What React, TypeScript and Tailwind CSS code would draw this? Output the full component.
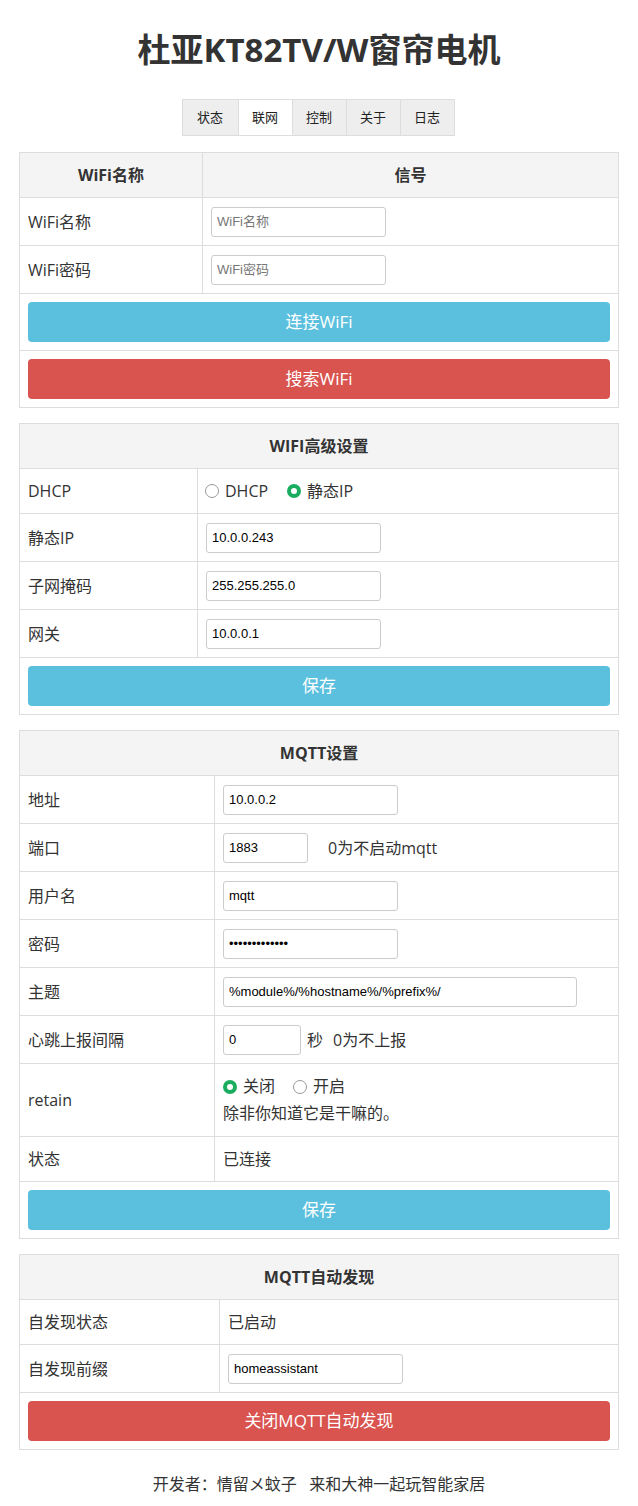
import React from 'react';

const tabs = ['状态', '联网', '控制', '关于', '日志'];

const Radio = ({ checked, label }: { checked?: boolean; label: string }) => (
  <span className="flex items-center">
    <span
      className={`box-border inline-block h-[14px] w-[14px] rounded-full ${
        checked ? 'border-[4px] border-[#1aad5f]' : 'border border-[#999]'
      }`}
    />
    <span className="ml-[6px]">{label}</span>
  </span>
);

const Input = ({
  value,
  placeholder,
  width = 'w-[175px]',
  type = 'text',
}: {
  value?: string;
  placeholder?: string;
  width?: string;
  type?: string;
}) => (
  <input
    type={type}
    defaultValue={value}
    placeholder={placeholder}
    className={`${width} h-[30px] rounded-[3px] border border-[#ccc] bg-white px-[5px] font-['Liberation_Sans','Noto_Sans_CJK_SC',sans-serif] text-[13px] text-black outline-none placeholder:text-[#777]`}
  />
);

const Header = ({ children }: { children: React.ReactNode }) => (
  <div className="flex h-[44px] items-center justify-center bg-[#f4f4f4] font-bold">{children}</div>
);

const Row = ({
  label,
  labelWidth,
  height = 'h-[48px]',
  children,
}: {
  label: string;
  labelWidth: string;
  height?: string;
  children: React.ReactNode;
}) => (
  <div className={`flex border-t border-[#ddd] ${height}`}>
    <div className={`${labelWidth} flex shrink-0 items-center border-r border-[#ddd] px-2`}>{label}</div>
    <div className="flex flex-1 items-center px-2">{children}</div>
  </div>
);

const Button = ({ children, danger }: { children: React.ReactNode; danger?: boolean }) => (
  <div className="border-t border-[#ddd] p-2">
    <button
      className={`h-[40px] w-full rounded-[4px] text-[17px] text-white ${danger ? 'bg-[#d9534f]' : 'bg-[#5bc0de]'}`}
    >
      {children}
    </button>
  </div>
);

export default function App() {
  return (
    <div className="min-h-[1506px] bg-white font-['Open_Sans','Noto_Sans_CJK_SC',sans-serif] text-[16px] text-[#333]">
      <div className="mx-auto w-[600px] pt-[28px]">
        <h1 className="text-center text-[33px] font-bold leading-[44px]">杜亚KT82TV/W窗帘电机</h1>

        <div className="mt-[27px] flex justify-center">
          <div className="-ml-[2px] flex border-l border-[#ddd]">
            {tabs.map((t, i) => (
              <div
                key={t}
                className={`flex h-[37px] items-center justify-center border-y border-r border-[#ddd] text-[13px] text-[#222] ${
                  i === 0 ? 'w-[56px]' : 'w-[54px]'
                } ${t === '联网' ? 'bg-white' : 'bg-[#eee]'}`}
              >
                {t}
              </div>
            ))}
          </div>
        </div>

        {/* 联网 */}
        <div className="mt-[16px] border border-[#ddd]">
          <div className="flex h-[44px] bg-[#f4f4f4] font-bold">
            <div className="flex w-[183px] items-center justify-center border-r border-[#ddd]">WiFi名称</div>
            <div className="flex flex-1 items-center justify-center">信号</div>
          </div>
          <Row label="WiFi名称" labelWidth="w-[183px]">
            <Input placeholder="WiFi名称" />
          </Row>
          <Row label="WiFi密码" labelWidth="w-[183px]">
            <Input placeholder="WiFi密码" />
          </Row>
          <Button>连接WiFi</Button>
          <Button danger>搜索WiFi</Button>
        </div>

        {/* WIFI高级设置 */}
        <div className="mt-[15px] border border-[#ddd]">
          <Header>WIFI高级设置</Header>
          <Row label="DHCP" labelWidth="w-[178px]" height="h-[45px]">
            <div className="-ml-px flex items-center gap-[19px]">
              <Radio label="DHCP" />
              <Radio checked label="静态IP" />
            </div>
          </Row>
          <Row label="静态IP" labelWidth="w-[178px]">
            <Input value="10.0.0.243" />
          </Row>
          <Row label="子网掩码" labelWidth="w-[178px]">
            <Input value="255.255.255.0" />
          </Row>
          <Row label="网关" labelWidth="w-[178px]">
            <Input value="10.0.0.1" />
          </Row>
          <Button>保存</Button>
        </div>

        {/* MQTT设置 */}
        <div className="mt-[15px] border border-[#ddd]">
          <Header>MQTT设置</Header>
          <Row label="地址" labelWidth="w-[195px]">
            <Input value="10.0.0.2" />
          </Row>
          <Row label="端口" labelWidth="w-[195px]">
            <Input value="1883" width="w-[85px]" />
            <span className="ml-[20px]">0为不启动mqtt</span>
          </Row>
          <Row label="用户名" labelWidth="w-[195px]">
            <Input value="mqtt" />
          </Row>
          <Row label="密码" labelWidth="w-[195px]">
            <Input value="mqttpassword1" type="password" />
          </Row>
          <Row label="主题" labelWidth="w-[195px]">
            <Input value="%module%/%hostname%/%prefix%/" width="w-[354px]" />
          </Row>
          <Row label="心跳上报间隔" labelWidth="w-[195px]">
            <Input value="0" width="w-[78px]" />
            <span className="ml-[6px]">秒</span>
            <span className="ml-[10px]">0为不上报</span>
          </Row>
          <Row label="retain" labelWidth="w-[195px]" height="h-[73px]">
            <div className="flex flex-col leading-[27px]">
              <div className="flex items-center gap-[18px]">
                <Radio checked label="关闭" />
                <Radio label="开启" />
              </div>
              <div>除非你知道它是干嘛的。</div>
            </div>
          </Row>
          <Row label="状态" labelWidth="w-[195px]" height="h-[45px]">
            已连接
          </Row>
          <Button>保存</Button>
        </div>

        {/* MQTT自动发现 */}
        <div className="mt-[15px] border border-[#ddd]">
          <Header>MQTT自动发现</Header>
          <Row label="自发现状态" labelWidth="w-[200px]" height="h-[45px]">
            已启动
          </Row>
          <Row label="自发现前缀" labelWidth="w-[200px]">
            <Input value="homeassistant" />
          </Row>
          <Button danger>关闭MQTT自动发现</Button>
        </div>

        <p className="mt-[23px] text-center leading-[22px]">开发者：情留メ蚊子&nbsp;&nbsp;&nbsp;来和大神一起玩智能家居</p>
      </div>
    </div>
  );
}
